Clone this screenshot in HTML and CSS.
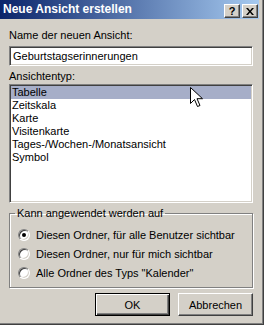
FILE: index.html
```html
<!DOCTYPE html>
<html lang="de">
<head>
    <meta charset="UTF-8">
    <title>Neue Ansicht erstellen</title>
    <link rel="stylesheet" href="styles.css">
</head>
<body>
    <div class="window">
        <div class="titlebar">
            <span class="title">Neue Ansicht erstellen</span>
            <div class="caption-buttons">
                <span class="cap-btn">?</span>
                <span class="cap-btn">
                    <svg width="8" height="7" viewBox="0 0 8 7"><path d="M0 0h2l2 2.5L6 0h2L5 3.5 8 7H6L4 4.5 2 7H0l3-3.5z" fill="#000"/></svg>
                </span>
            </div>
        </div>
        <div class="content">
            <div class="label">Name der neuen Ansicht:</div>
            <div class="textbox">Geburtstagserinnerungen</div>
            <div class="label second">Ansichtentyp:</div>
            <div class="listbox">
                <div class="item selected">Tabelle</div>
                <div class="item">Zeitskala</div>
                <div class="item">Karte</div>
                <div class="item">Visitenkarte</div>
                <div class="item">Tages-/Wochen-/Monatsansicht</div>
                <div class="item">Symbol</div>
            </div>
            <fieldset class="group">
                <legend>Kann angewendet werden auf</legend>
                <div class="radio-row"><span class="radio checked"></span>Diesen Ordner, für alle Benutzer sichtbar</div>
                <div class="radio-row"><span class="radio"></span>Diesen Ordner, nur für mich sichtbar</div>
                <div class="radio-row"><span class="radio"></span>Alle Ordner des Typs "Kalender"</div>
            </fieldset>
            <div class="buttons">
                <div class="btn default">OK</div>
                <div class="btn">Abbrechen</div>
            </div>
        </div>
        <svg class="cursor" width="13" height="21" viewBox="0 0 13 21">
            <path d="M0.5 0.5v16l4-4 3 7 2.5-1-3-6.8h5.5z" fill="#fff" stroke="#000" stroke-width="1"/>
        </svg>
    </div>
</body>
</html>
```

FILE: styles.css
```css
*{
    box-sizing: border-box;
}
body{
    margin: 0;
    font-family: "Liberation Sans", Arial, sans-serif;
    font-size: 11px;
    color: #000;
}
.window{
    position: relative;
    width: 264px;
    height: 325px;
    background-color: #d4d0c8;
    padding: 0 4px 4px 0;
    border-right: 1px solid #404040;
    border-bottom: 1px solid #404040;
    box-shadow: inset -1px -1px #808080;
}
.titlebar{
    height: 19px;
    padding: 0 1px 1px 3px;
    display: flex;
    justify-content: space-between;
    align-items: flex-end;
    background: linear-gradient(to right, #0a246a, #a6caf0);
}
.title{
    align-self: center;
    color: #fff;
    font-weight: bold;
    font-size: 12px;
    line-height: 14px;
}
.caption-buttons{
    display: flex;
    gap: 2px;
}
.cap-btn{
    width: 16px;
    height: 14px;
    display: flex;
    justify-content: center;
    align-items: center;
    background-color: #d4d0c8;
    font-weight: bold;
    font-size: 11px;
    border: 1px solid;
    border-color: #fff #404040 #404040 #fff;
    box-shadow: inset -1px -1px #808080;
}
.content{
    padding: 0 6px 0 9px;
}
.label{
    margin-top: 10px;
    line-height: 13px;
}
.label.second{
    margin-top: 4px;
}
.textbox{
    margin-top: 4px;
    height: 20px;
    padding: 1px 3px 0;
    line-height: 16px;
    background-color: #fff;
    border: 1px solid;
    border-color: #808080 #fff #fff #808080;
    box-shadow: inset 1px 1px #404040, inset -1px -1px #d4d0c8;
}
.listbox{
    margin-top: 1px;
    height: 119px;
    padding: 1px;
    background-color: #fff;
    border: 1px solid;
    border-color: #808080 #fff #fff #808080;
    box-shadow: inset 1px 1px #404040, inset -1px -1px #d4d0c8;
}
.item{
    height: 13px;
    line-height: 13px;
    padding-left: 1px;
}
.item.selected{
    background-color: #a6aec8;
}
.group{
    margin: 4px 0 0 0;
    padding: 5px 0 3px 8px;
    height: 81px;
    border: 1px solid #808080;
    box-shadow: inset 1px 1px #fff, 1px 1px #fff;
}
.group legend{
    padding: 0 2px;
    margin-left: -3px;
    line-height: 13px;
}
.radio-row{
    display: flex;
    align-items: center;
    gap: 6px;
    height: 19px;
}
.radio{
    width: 12px;
    height: 12px;
    border-radius: 50%;
    background-color: #fff;
    border: 1px solid;
    border-color: #808080 #fff #fff #808080;
    box-shadow: inset 1px 1px #404040, inset -1px -1px #d4d0c8;
    display: flex;
    justify-content: center;
    align-items: center;
}
.radio.checked::after{
    content: "";
    width: 4px;
    height: 4px;
    border-radius: 50%;
    background-color: #000;
}
.buttons{
    margin-top: 5px;
    display: flex;
    justify-content: flex-end;
    gap: 8px;
}
.btn{
    width: 75px;
    height: 23px;
    display: flex;
    justify-content: center;
    align-items: center;
    background-color: #d4d0c8;
    border: 1px solid;
    border-color: #fff #404040 #404040 #fff;
    box-shadow: inset -1px -1px #808080;
}
.btn.default{
    border: 1px solid #000;
    box-shadow: inset 1px 1px #fff, inset -1px -1px #404040, inset -2px -2px #808080;
}
.cursor{
    position: absolute;
    left: 190px;
    top: 87px;
}
```
